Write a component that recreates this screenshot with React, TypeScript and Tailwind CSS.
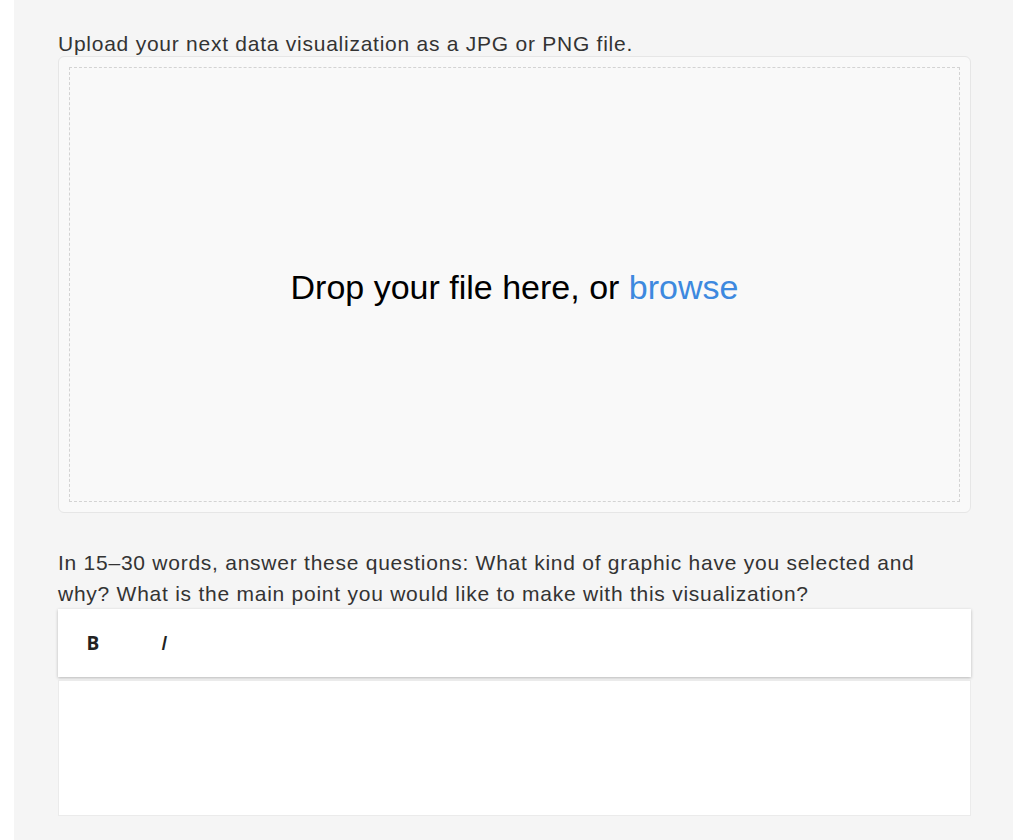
import React from 'react';

export default function App() {
  return (
    <div className="min-h-screen bg-white flex" style={{ fontFamily: '"Liberation Sans", Arial, sans-serif' }}>
      <div className="ml-[14px] w-[999px] min-h-[840px] bg-[#f5f5f5] pl-[44px] pr-[42px] pt-[30px]">
        <p className="text-[21px] leading-[28px] tracking-[0.75px] text-[#333]">Upload your next data visualization as a JPG or PNG file.</p>

        <div className="mt-[-2px] h-[457px] rounded-md border border-[#e6e6e6] bg-[#f9f9f9] p-[10px]">
          <div className="h-full border border-dashed border-[#d3d3d3] flex items-center justify-center pt-[6px]">
            <p className="text-[34px] text-black">
              Drop your file here, or <span className="text-[#3d89df] cursor-pointer">browse</span>
            </p>
          </div>
        </div>

        <p className="mt-[34px] text-[21px] leading-[31px] tracking-[0.75px] text-[#333]">
          In 15–30 words, answer these questions: What kind of graphic have you selected and why? What is the main point you would like to make with this visualization?
        </p>

        <div className="h-[68px] bg-white shadow-[0_1px_3px_rgba(0,0,0,0.25)] flex items-center pl-[17px] gap-[35px]" style={{ fontFamily: '"Open Sans", sans-serif' }}>
          <button className="w-[36px] h-[36px] text-[19px] font-bold text-[#222]">B</button>
          <button className="w-[36px] h-[36px] text-[19px] italic font-semibold text-[#222]">I</button>
        </div>

        <div className="mt-[3px] h-[136px] bg-white border border-[#ebebeb]" />
      </div>
    </div>
  );
}
